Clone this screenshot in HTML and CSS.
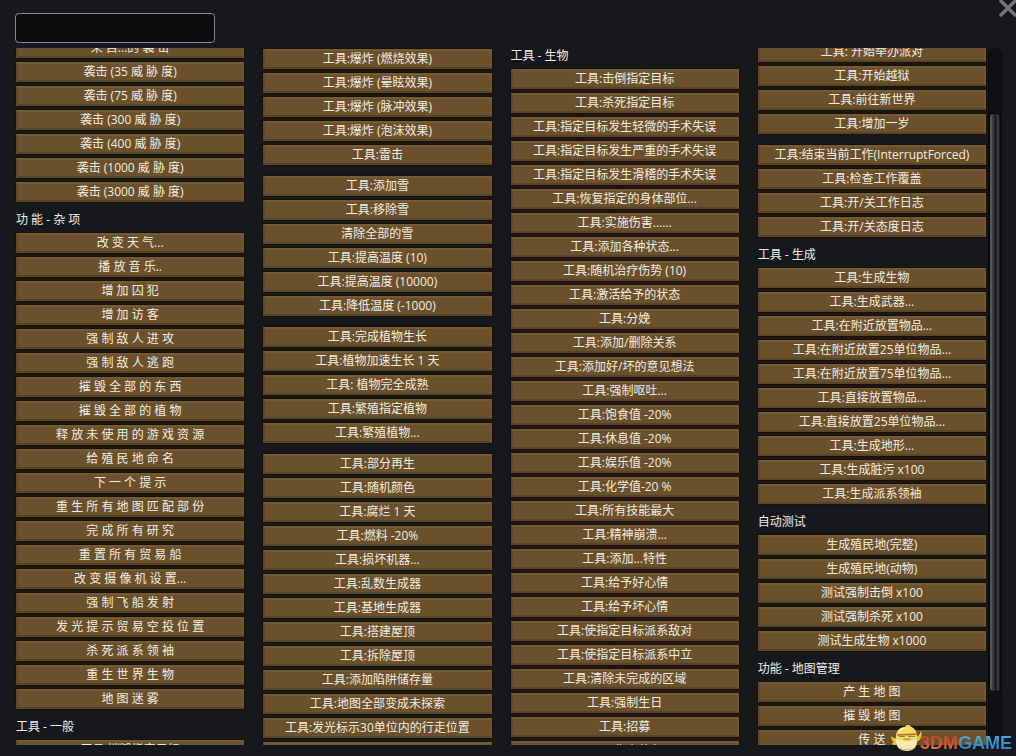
FILE: index.html
```html
<!DOCTYPE html>
<html lang="zh-CN">
<head>
<meta charset="utf-8">
<meta name="viewport" content="width=device-width, initial-scale=1">
<title>调试操作</title>
<link rel="stylesheet" href="styles.css">
</head>
<body>
<main class="window">
  <header class="toolbar">
    <input class="filter" type="text" aria-label="筛选">
    <button class="close" type="button" aria-label="关闭">
      <svg viewBox="0 0 18 18" width="18" height="18" aria-hidden="true"><path d="M2 1L16 15M16 1L2 15" fill="none" stroke="#737577" stroke-width="3.4" stroke-linecap="round"/></svg>
    </button>
  </header>
  <div class="body">
    <div class="columns">
      <section class="column column-events">
        <button type="button">来 自...的 袭 击</button>
        <button type="button">袭击 (35 威 胁 度)</button>
        <button type="button">袭击 (75 威 胁 度)</button>
        <button type="button">袭击 (300 威 胁 度)</button>
        <button type="button">袭击 (400 威 胁 度)</button>
        <button type="button">袭击 (1000 威 胁 度)</button>
        <button type="button">袭击 (3000 威 胁 度)</button>
        <h2>功 能 - 杂 项</h2>
        <button type="button">改 变 天 气...</button>
        <button type="button">播 放 音 乐..</button>
        <button type="button">增 加 囚 犯</button>
        <button type="button">增 加 访 客</button>
        <button type="button">强 制 敌 人 进 攻</button>
        <button type="button">强 制 敌 人 逃 跑</button>
        <button type="button">摧 毁 全 部 的 东 西</button>
        <button type="button">摧 毁 全 部 的 植 物</button>
        <button type="button">释 放 未 使 用 的 游 戏 资 源</button>
        <button type="button">给 殖 民 地 命 名</button>
        <button type="button">下 一 个 提 示</button>
        <button type="button">重 生 所 有 地 图 匹 配 部 份</button>
        <button type="button">完 成 所 有 研 究</button>
        <button type="button">重 置 所 有 贸 易 船</button>
        <button type="button">改 变 摄 像 机 设 置...</button>
        <button type="button">强 制 飞 船 发 射</button>
        <button type="button">发 光 提 示 贸 易 空 投 位 置</button>
        <button type="button">杀 死 派 系 领 袖</button>
        <button type="button">重 生 世 界 生 物</button>
        <button type="button">地 图 迷 雾</button>
        <h2>工具 - 一般</h2>
        <button type="button">工具:摧毁指定目标</button>
      </section>
      <section class="column column-general">
        <button type="button">工具:爆炸 (燃烧效果)</button>
        <button type="button">工具:爆炸 (晕眩效果)</button>
        <button type="button">工具:爆炸 (脉冲效果)</button>
        <button type="button">工具:爆炸 (泡沫效果)</button>
        <button type="button">工具:雷击</button>
        <button class="group-start" type="button">工具:添加雪</button>
        <button type="button">工具:移除雪</button>
        <button type="button">清除全部的雪</button>
        <button type="button">工具:提高温度 (10)</button>
        <button type="button">工具:提高温度 (10000)</button>
        <button type="button">工具:降低温度 (-1000)</button>
        <button class="group-start" type="button">工具:完成植物生长</button>
        <button type="button">工具:植物加速生长 1 天</button>
        <button type="button">工具: 植物完全成熟</button>
        <button type="button">工具:繁殖指定植物</button>
        <button type="button">工具:繁殖植物...</button>
        <button class="group-start" type="button">工具:部分再生</button>
        <button type="button">工具:随机颜色</button>
        <button type="button">工具:腐烂 1 天</button>
        <button type="button">工具:燃料 -20%</button>
        <button type="button">工具:损坏机器...</button>
        <button type="button">工具:乱数生成器</button>
        <button type="button">工具:基地生成器</button>
        <button type="button">工具:搭建屋顶</button>
        <button type="button">工具:拆除屋顶</button>
        <button type="button">工具:添加陷阱储存量</button>
        <button type="button">工具:地图全部变成未探索</button>
        <button type="button">工具:发光标示30单位内的行走位置</button>
        <button type="button">工具:发光标示位置</button>
      </section>
      <section class="column column-pawns">
        <h2>工具 - 生物</h2>
        <button type="button">工具:击倒指定目标</button>
        <button type="button">工具:杀死指定目标</button>
        <button type="button">工具:指定目标发生轻微的手术失误</button>
        <button type="button">工具:指定目标发生严重的手术失误</button>
        <button type="button">工具:指定目标发生滑稽的手术失误</button>
        <button type="button">工具:恢复指定的身体部位...</button>
        <button type="button">工具:实施伤害......</button>
        <button type="button">工具:添加各种状态...</button>
        <button type="button">工具:随机治疗伤势 (10)</button>
        <button type="button">工具:激活给予的状态</button>
        <button type="button">工具:分娩</button>
        <button type="button">工具:添加/删除关系</button>
        <button type="button">工具:添加好/坏的意见想法</button>
        <button type="button">工具:强制呕吐...</button>
        <button type="button">工具:饱食值 -20%</button>
        <button type="button">工具:休息值 -20%</button>
        <button type="button">工具:娱乐值 -20%</button>
        <button type="button">工具:化学值-20 %</button>
        <button type="button">工具:所有技能最大</button>
        <button type="button">工具:精神崩溃...</button>
        <button type="button">工具:添加...特性</button>
        <button type="button">工具:给予好心情</button>
        <button type="button">工具:给予坏心情</button>
        <button type="button">工具:使指定目标派系敌对</button>
        <button type="button">工具:使指定目标派系中立</button>
        <button type="button">工具:清除未完成的区域</button>
        <button type="button">工具:强制生日</button>
        <button type="button">工具:招募</button>
        <button type="button">工具:伤害装备</button>
      </section>
      <section class="column column-spawning">
        <button type="button">工具: 开始举办派对</button>
        <button type="button">工具:开始越狱</button>
        <button type="button">工具:前往新世界</button>
        <button type="button">工具:增加一岁</button>
        <button class="group-start" type="button">工具:结束当前工作(InterruptForced)</button>
        <button type="button">工具:检查工作覆盖</button>
        <button type="button">工具:开/关工作日志</button>
        <button type="button">工具:开/关态度日志</button>
        <h2>工具 - 生成</h2>
        <button type="button">工具:生成生物</button>
        <button type="button">工具:生成武器...</button>
        <button type="button">工具:在附近放置物品...</button>
        <button type="button">工具:在附近放置25单位物品...</button>
        <button type="button">工具:在附近放置75单位物品...</button>
        <button type="button">工具:直接放置物品...</button>
        <button type="button">工具:直接放置25单位物品...</button>
        <button type="button">工具:生成地形...</button>
        <button type="button">工具:生成脏污 x100</button>
        <button type="button">工具:生成派系领袖</button>
        <h2>自动测试</h2>
        <button type="button">生成殖民地(完整)</button>
        <button type="button">生成殖民地(动物)</button>
        <button type="button">测试强制击倒 x100</button>
        <button type="button">测试强制杀死 x100</button>
        <button type="button">测试生成生物 x1000</button>
        <h2>功能 - 地图管理</h2>
        <button type="button">产 生 地 图</button>
        <button type="button">摧 毁 地 图</button>
        <button type="button">传 送</button>
      </section>
    </div>
    <div class="track"><div class="thumb"></div></div>
  </div>
  <div class="brand">
    <svg class="mascot" viewBox="0 0 32 28" width="32" height="28" aria-hidden="true">
      <path d="M8 14C4 15 2 13 1 12C1 15 2 17 4 18C3 19 2 19 2 20C4 22 7 21 10 18Z" fill="#f3c544"/>
      <path d="M25 13C28 13 30 10 31 7C33 12 30 17 26 18Z" fill="#efbb38"/>
      <path d="M6 13C5 22 9 27 17 27C25 27 28 21 27 13Z" fill="#f8e9b4"/>
      <path d="M6 15C5 7 10 3 15 3C15 1 19 0 20 2C25 4 28 9 27 15Q17 18 6 15Z" fill="#f7dc62"/>
      <path d="M9 8C11 5 13 4 15 4" fill="none" stroke="#fff3a0" stroke-width="1.5"/>
      <path d="M7 11L27 10" stroke="#c7622c" stroke-width="1.4"/>
      <path d="M9 12.400H15M18 12.400H25" stroke="#4a9a65" stroke-width="1.3"/>
      <path d="M12 15Q17 13 22 15Q18 18 12 15Z" fill="#ed982d"/>
      <path d="M10 24Q17 28 24 24" fill="none" stroke="#dcb45b" stroke-width="1"/>
    </svg>
    <span class="wordmark"><span class="brand-red">3DM</span><span class="brand-blue">GAME</span></span>
  </div>
</main>
</body>
</html>
```
FILE: styles.css
```css
* {
  box-sizing: border-box;
}

body {
  margin: 0;
  background: #15191d;
  color: #f2eee2;
  font-family: "Open Sans", "Noto Sans CJK SC", sans-serif;
  font-size: 12px;
}

.window {
  position: relative;
  display: flex;
  flex-direction: column;
  height: 100vh;
  overflow: hidden;
  padding-bottom: 11px;
}

.toolbar {
  display: flex;
  flex: none;
  justify-content: space-between;
  align-items: flex-start;
  height: 48px;
  padding-left: 15px;
}

.filter {
  width: 200px;
  height: 30px;
  margin-top: 13px;
  padding: 0 8px;
  border: 1px solid #858889;
  border-radius: 4px;
  background: #0b0c0e;
  color: inherit;
  font: inherit;
}

.close {
  width: 18px;
  height: 18px;
  margin-right: -1px;
  padding: 0;
  border: 0;
  background: none;
}

.close svg {
  display: block;
}

.body {
  display: flex;
  flex: 1;
  min-height: 0;
  padding: 0 14px;
}

.columns {
  display: grid;
  flex: 1;
  grid-template-columns: repeat(4, 1fr);
  gap: 19px;
  overflow: hidden;
  padding: 0 2px;
}

.column {
  display: flex;
  flex-direction: column;
  min-width: 0;
}

.column-events {
  margin-top: -10px;
}

.column-general {
  margin-top: 1px;
}

.column-pawns,
.column-spawning {
  margin-top: -6px;
}

.column button {
  flex: none;
  height: 20px;
  margin: 0 0 4px;
  padding: 0 4px 1px;
  border: 2px solid;
  border-color: #745b33 #705832 #57452a #5e4829;
  background: #6a512c;
  box-shadow: 0 0 0 1px #17110d, 0 0 0 2px #1e1710;
  color: inherit;
  font: inherit;
  line-height: 15px;
  white-space: nowrap;
}

.column .group-start {
  margin-top: 7px;
}

.column h2 {
  flex: none;
  height: 27px;
  margin: 0;
  font-size: 12px;
  font-weight: 400;
  line-height: 28px;
}

.track {
  flex: none;
  width: 14px;
  padding: 64px 0 52px;
  border: 1px solid #090b0d;
  border-radius: 7px;
  background: #0e1113;
}

.thumb {
  height: 100%;
  border: 1px solid #08090a;
  border-radius: 4px;
  background: linear-gradient(to right, #555657 0 2px, #3b3c3d 2px 4px, #202122 4px 7px, #37383a 7px 9px, #1b1c1d 9px);
}

.brand {
  position: absolute;
  right: 4px;
  bottom: 4px;
  display: flex;
  align-items: flex-end;
}

.mascot {
  margin-right: -2px;
}

.wordmark {
  font: bold 18px/18px "Liberation Sans", sans-serif;
}

.brand-red,
.brand-blue {
  background-clip: text;
  color: transparent;
}

.brand-red {
  background-image: linear-gradient(#b94028, #f26a35);
}

.brand-blue {
  background-image: linear-gradient(#46b8ed, #2376b5);
}
```
